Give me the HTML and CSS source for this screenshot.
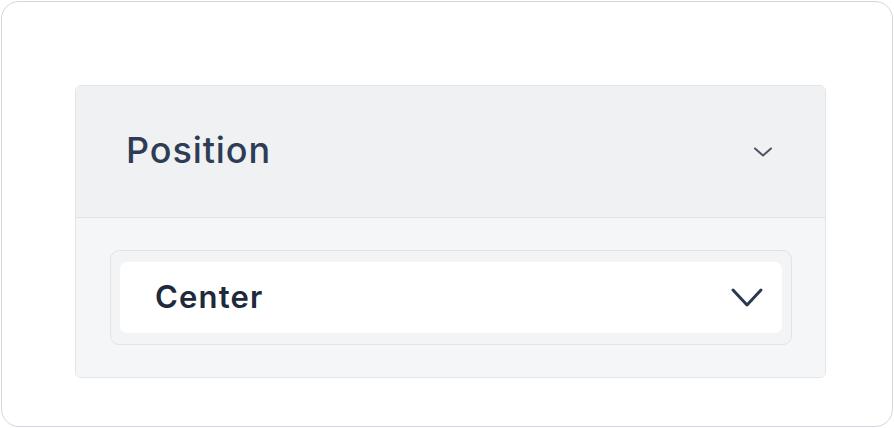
FILE: index.html
```html
<!DOCTYPE html>
<html>
<head>
<meta charset="utf-8">
<link rel="stylesheet" href="styles.css">
</head>
<body>
<div class="card">
  <div class="panel">
    <div class="panel-header">
      <span class="panel-title">Position</span>
      <svg class="header-chevron" width="22" height="14" viewBox="0 0 22 14"><path d="M3 3.5 L11 10.5 L19 3.5" fill="none" stroke="#4b5566" stroke-width="2" stroke-linecap="round" stroke-linejoin="round"/></svg>
    </div>
    <div class="panel-body">
      <div class="select">
        <div class="select-inner">
          <span class="select-value">Center</span>
          <svg class="select-chevron" width="34" height="26" viewBox="0 0 34 26"><path d="M3 5 L17 20 L31 5" fill="none" stroke="#2b3850" stroke-width="3" stroke-linecap="round" stroke-linejoin="round"/></svg>
        </div>
      </div>
    </div>
  </div>
</div>
</body>
</html>
```

FILE: styles.css
```css
* { box-sizing: border-box; }
html, body { margin: 0; padding: 0; background: #ffffff; }
body {
  width: 894px;
  height: 428px;
  padding: 1px;
  font-family: Inter, "Liberation Sans", sans-serif;
}
.card {
  width: 892px;
  height: 426px;
  border: 1.5px solid #d4d6db;
  border-radius: 18px;
  background: #ffffff;
  padding: 83px 0 0 73px;
}
.panel {
  width: 751px;
  height: 293px;
  border: 1px solid #e3e5e9;
  border-radius: 6px;
  overflow: hidden;
  display: flex;
  flex-direction: column;
}
.panel-header {
  height: 132px;
  background: #f0f1f3;
  border-bottom: 1px solid #e0e2e6;
  display: flex;
  align-items: center;
  justify-content: space-between;
  padding: 0 51px 4px 50px;
}
.panel-title {
  font-size: 36px;
  font-weight: 500;
  color: #2f3c55;
  letter-spacing: 0.9px;
}
.header-chevron { display: block; margin-top: 4px; }
.panel-body {
  flex: 1;
  background: #f5f6f8;
  padding: 32px 33px 0 34px;
}
.select {
  height: 95px;
  border: 1px solid #e1e3e7;
  border-radius: 9px;
  background: #f3f4f6;
  padding: 11px 9px 11px 9px;
}
.select-inner {
  height: 100%;
  background: #ffffff;
  border-radius: 7px;
  display: flex;
  align-items: center;
  justify-content: space-between;
  padding: 0 18px 3px 35px;
}
.select-value {
  font-size: 31px;
  font-weight: 600;
  color: #1e293b;
  letter-spacing: 1.2px;
}
.select-chevron { display: block; margin-top: 3px; }
```
